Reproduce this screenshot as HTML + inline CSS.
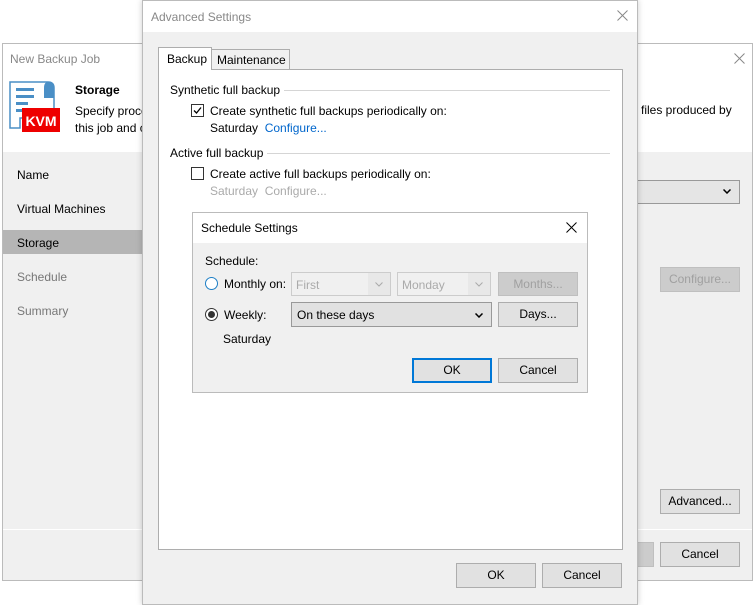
<!DOCTYPE html>
<html><head><style>
*{box-sizing:border-box;margin:0;padding:0}
body{width:755px;height:605px;position:relative;background:#fff;font-family:"Liberation Sans",sans-serif;font-size:12px;color:#000;overflow:hidden}
.a{position:absolute}
.btn{position:absolute;background:#e1e1e1;border:1px solid #adadad;text-align:center;line-height:22px;font-size:12px}
.dis{color:#a0a0a0;background:#ccc;border-color:#bfbfbf}
.sep{position:absolute;height:1px;background:#d5d5d5}
.cb{position:absolute;width:13px;height:13px;border:1px solid #333;background:#fff}
.gray{color:#9a9a9a}
.link{color:#0066cc}
</style></head><body>
<div class="a" style="left:2px;top:43px;width:751px;height:538px;border:1px solid #bbb;background:#f0f0f0"></div>
<div class="a" style="left:3px;top:44px;width:749px;height:108px;background:#fff"></div>
<div class="a" style="left:10px;top:52px;font-size:12px;color:#888">New Backup Job</div>
<svg class="a" style="left:734px;top:53px" width="11" height="11"><path d="M0.5 0.5L10.5 10.5M10.5 0.5L0.5 10.5" stroke="#888" stroke-width="1"/></svg>
<svg class="a" style="left:8px;top:80px" width="52" height="52" viewBox="0 0 52 52">
<path d="M2 2 H40 Q46 2 46 8 V38 H12 V48 H2 Z" fill="#fff" stroke="#4a8fc6" stroke-width="1.5"/>
<path d="M40 2 Q46 2 46 8 V18 H36 V8 Q36 2 40 2Z" fill="#4a8fc6"/>
<rect x="8" y="8" width="18" height="3" fill="#4a8fc6"/><rect x="8" y="15" width="18" height="3" fill="#4a8fc6"/><rect x="8" y="22" width="12" height="3" fill="#4a8fc6"/><rect x="8" y="29" width="12" height="3" fill="#4a8fc6"/>
<rect x="14" y="28" width="38" height="24" fill="#e00"/>
<text x="33" y="46" font-family="Liberation Sans" font-weight="bold" font-size="14" fill="#fff" text-anchor="middle">KVM</text>
</svg>
<div class="a" style="left:75px;top:83px;font-weight:bold">Storage</div>
<div class="a" style="left:75px;top:103px;line-height:17px">Specify proce<br>this job and c</div>
<div class="a" style="left:641px;top:103px">files produced by</div>
<div class="a" style="left:3px;top:152px;width:139px;height:377px;background:#f0f0f0"></div>
<div class="a" style="left:17px;top:168px">Name</div>
<div class="a" style="left:17px;top:202px">Virtual Machines</div>
<div class="a" style="left:3px;top:230px;width:140px;height:24px;background:#b5b5b5"></div>
<div class="a" style="left:17px;top:236px">Storage</div>
<div class="a" style="left:17px;top:270px;color:#777">Schedule</div>
<div class="a" style="left:17px;top:304px;color:#777">Summary</div>
<div class="a" style="left:630px;top:180px;width:110px;height:24px;background:#e5e5e5;border:1px solid #999"></div>
<svg class="a" style="left:723px;top:189px" width="8" height="5"><path d="M0.5 0.5L4 4L7.5 0.5" stroke="#000" stroke-width="1.5" fill="none"/></svg>
<div class="btn dis" style="left:660px;top:267px;width:80px;height:25px">Configure...</div>
<div class="btn" style="left:660px;top:489px;width:80px;height:25px">Advanced...</div>
<div class="a" style="left:3px;top:529px;width:749px;height:1px;background:#fff"></div>
<div class="btn dis" style="left:620px;top:542px;width:34px;height:25px"></div>
<div class="btn" style="left:660px;top:542px;width:80px;height:25px">Cancel</div>
<div class="a" style="left:142px;top:0;width:496px;height:605px;border:1px solid #bbb;background:#f0f0f0;box-shadow:0 0 6px rgba(0,0,0,.2)"></div>
<div class="a" style="left:143px;top:1px;width:494px;height:31px;background:#fff"></div>
<div class="a" style="left:151px;top:10px;color:#888">Advanced Settings</div>
<svg class="a" style="left:617px;top:10px" width="11" height="11"><path d="M0.5 0.5L10.5 10.5M10.5 0.5L0.5 10.5" stroke="#888" stroke-width="1"/></svg>
<div class="a" style="left:158px;top:69px;width:465px;height:481px;background:#fff;border:1px solid #adadad"></div>
<div class="a" style="left:211px;top:49px;width:79px;height:21px;background:#f0f0f0;border:1px solid #adadad;padding:3px 0 0 5px">Maintenance</div>
<div class="a" style="left:158px;top:47px;width:54px;height:23px;background:#fff;border:1px solid #adadad;border-bottom:none;padding:4px 0 0 8px">Backup</div>
<div class="a" style="left:170px;top:83px">Synthetic full backup</div>
<div class="sep" style="left:284px;top:90px;width:326px"></div>
<div class="cb" style="left:191px;top:104px"><svg width="11" height="11" style="position:absolute;left:0;top:0"><path d="M2 5.5L4.5 8L9 2.5" stroke="#000" stroke-width="1.3" fill="none"/></svg></div>
<div class="a" style="left:210px;top:104px">Create synthetic full backups periodically on:</div>
<div class="a" style="left:210px;top:121px">Saturday <span class="link">&nbsp;Configure...</span></div>
<div class="a" style="left:170px;top:146px">Active full backup</div>
<div class="sep" style="left:267px;top:153px;width:343px"></div>
<div class="cb" style="left:191px;top:167px"></div>
<div class="a" style="left:210px;top:167px">Create active full backups periodically on:</div>
<div class="a" style="left:210px;top:184px;color:#aaa">Saturday &nbsp;Configure...</div>
<div class="btn" style="left:456px;top:563px;width:80px;height:25px">OK</div>
<div class="btn" style="left:542px;top:563px;width:80px;height:25px">Cancel</div>
<div class="a" style="left:192px;top:212px;width:396px;height:181px;border:1px solid #bbb;background:#f0f0f0"></div>
<div class="a" style="left:193px;top:213px;width:394px;height:30px;background:#fff"></div>
<div class="a" style="left:201px;top:221px">Schedule Settings</div>
<svg class="a" style="left:566px;top:222px" width="11" height="11"><path d="M0.5 0.5L10.5 10.5M10.5 0.5L0.5 10.5" stroke="#000" stroke-width="1"/></svg>
<div class="a" style="left:205px;top:254px">Schedule:</div>
<div class="a" style="left:205px;top:277px;width:13px;height:13px;border-radius:50%;border:1px solid #1e7fc6;background:#fff"></div>
<div class="a" style="left:224px;top:277px">Monthly on:</div>
<div class="a" style="left:291px;top:272px;width:100px;height:24px;border:1px solid #ccc;background:#f0f0f0;color:#aaa;padding:5px 4px">First<span style="position:absolute;right:0;top:0;width:22px;height:22px;background:#e8e8e8"><svg style="position:absolute;left:7px;top:9px" width="8" height="5"><path d="M0.5 0.5L4 4L7.5 0.5" stroke="#aaa" stroke-width="1" fill="none"/></svg></span></div>
<div class="a" style="left:397px;top:272px;width:94px;height:24px;border:1px solid #ccc;background:#f0f0f0;color:#aaa;padding:5px 4px">Monday<span style="position:absolute;right:0;top:0;width:22px;height:22px;background:#e8e8e8"><svg style="position:absolute;left:7px;top:9px" width="8" height="5"><path d="M0.5 0.5L4 4L7.5 0.5" stroke="#aaa" stroke-width="1" fill="none"/></svg></span></div>
<div class="btn dis" style="left:498px;top:272px;width:80px;height:24px">Months...</div>
<div class="a" style="left:205px;top:308px;width:13px;height:13px;border-radius:50%;border:1px solid #333;background:#fff"><div style="margin:2px;width:7px;height:7px;border-radius:50%;background:#333"></div></div>
<div class="a" style="left:224px;top:308px">Weekly:</div>
<div class="a" style="left:291px;top:302px;width:201px;height:25px;border:1px solid #999;background:#e1e1e1;padding:5px 5px">On these days<svg style="position:absolute;right:8px;top:10px" width="8" height="5"><path d="M0.5 0.5L4 4L7.5 0.5" stroke="#000" stroke-width="1.5" fill="none"/></svg></div>
<div class="btn" style="left:498px;top:302px;width:80px;height:25px">Days...</div>
<div class="a" style="left:223px;top:332px">Saturday</div>
<div class="btn" style="left:412px;top:358px;width:80px;height:25px;border:2px solid #0078d7;line-height:21px">OK</div>
<div class="btn" style="left:498px;top:358px;width:80px;height:25px">Cancel</div>
</body></html>
